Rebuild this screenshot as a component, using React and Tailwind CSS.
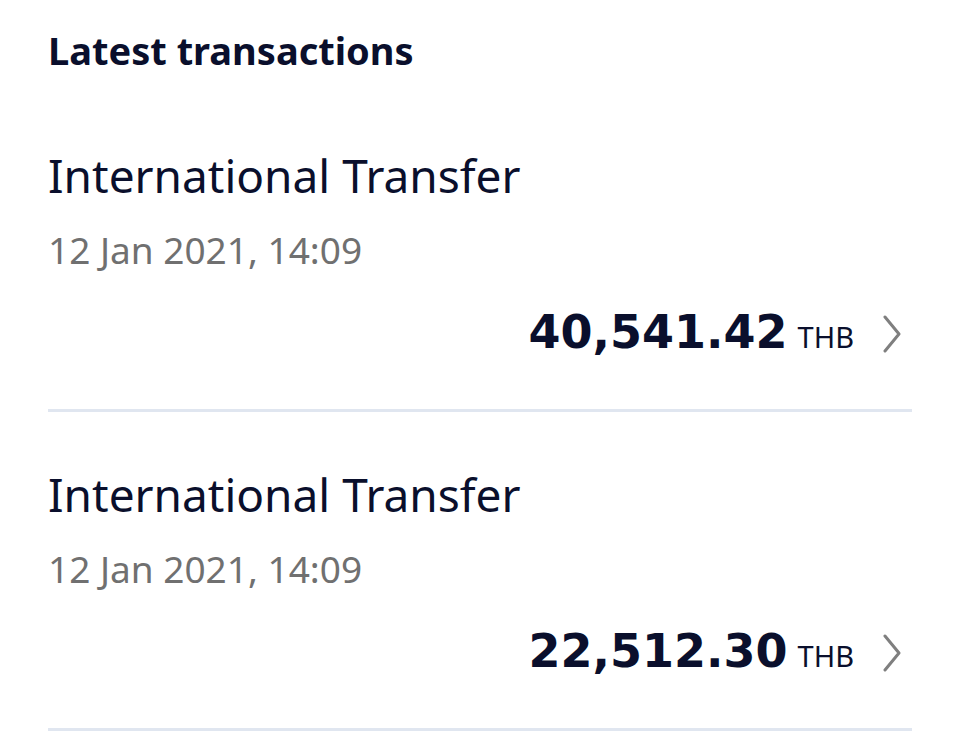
import React from "react";

const items = [
  { title: "International Transfer", date: "12 Jan 2021, 14:09", amount: "40,541.42" },
  { title: "International Transfer", date: "12 Jan 2021, 14:09", amount: "22,512.30" },
];

const noto = { fontFamily: '"Noto Sans", sans-serif' };
const dejavu = { fontFamily: '"DejaVu Sans", sans-serif' };

function Chevron() {
  return (
    <svg width="20" height="38" viewBox="0 0 20 38" fill="none" className="block translate-y-[5px]">
      <path d="M3 2 L17 19 L3 36" stroke="#7f7f7f" strokeWidth="3" strokeLinecap="round" strokeLinejoin="round" />
    </svg>
  );
}

export default function App() {
  return (
    <div className="min-h-[747px] bg-white px-[48px] pt-[26px]">
      <h2 className="text-[38px] leading-[48px] font-bold text-[#0a0f2c] mb-[19px]" style={noto}>
        Latest transactions
      </h2>
      <div className="flex flex-col">
        {items.map((it, i) => (
          <div key={i} className="border-b-[3px] border-[#e0e6f0] pt-[54px] pb-[49px]">
            <div className="text-[46px] leading-[56px] text-[#0a0f2c]" style={noto}>{it.title}</div>
            <div className="text-[37px] leading-[44px] mt-[25px] text-[#707070]" style={noto}>{it.date}</div>
            <div className="flex items-baseline justify-end mt-[32px]">
              <span className="text-[46px] leading-[56px] font-bold text-[#0a0f2c]" style={dejavu}>{it.amount}</span>
              <span className="text-[29px] ml-[10px] text-[#0a0f2c]" style={noto}>THB</span>
              <span className="ml-[28px] mr-[10px] self-baseline"><Chevron /></span>
            </div>
          </div>
        ))}
      </div>
    </div>
  );
}
